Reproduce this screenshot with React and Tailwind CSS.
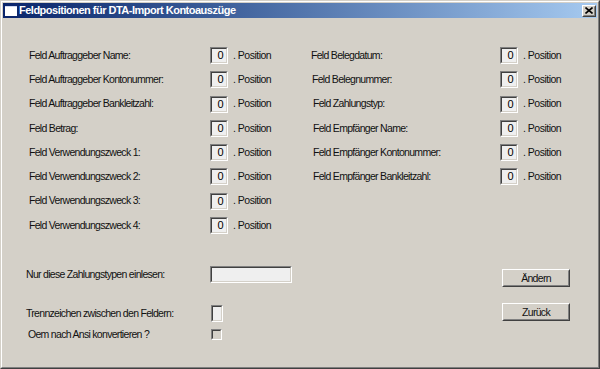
import React from "react";

function Sunken({ className = "", inner = "bg-[#efefef]", children }) {
  return (
    <div className={"border border-t-[#808080] border-l-[#808080] border-b-white border-r-white " + className}>
      <div className={"w-full h-full border border-t-[#404040] border-l-[#404040] border-b-[#d4d0c8] border-r-[#d4d0c8] " + inner}>
        {children}
      </div>
    </div>
  );
}

function Raised({ className = "", children }) {
  return (
    <div className={"border border-t-white border-l-white border-b-[#404040] border-r-[#404040] " + className}>
      <div className="w-full h-full border border-t-[#d4d0c8] border-l-[#d4d0c8] border-b-[#808080] border-r-[#808080] bg-[#d4d0c8] flex items-center justify-center">
        {children}
      </div>
    </div>
  );
}

function NumBox() {
  return (
    <Sunken className="w-[18px] h-[17px] shrink-0">
      <div className="h-full flex items-center justify-end pr-[3px] text-[11px] leading-none text-black">0</div>
    </Sunken>
  );
}

function Row({ label, labelW, offset = 0 }) {
  return (
    <div className="flex items-center h-[17px]">
      <div className="shrink-0 whitespace-nowrap" style={{ width: labelW, paddingLeft: offset }}>
        {label}
      </div>
      <NumBox />
      <div className="ml-[5px] whitespace-nowrap tracking-[-0.5px]">. Position</div>
    </div>
  );
}

export default function App() {
  const left = [
    "Feld Auftraggeber Name:",
    "Feld Auftraggeber Kontonummer:",
    "Feld Auftraggeber Bankleitzahl:",
    "Feld Betrag:",
    "Feld Verwendungszweck 1:",
    "Feld Verwendungszweck 2:",
    "Feld Verwendungszweck 3:",
    "Feld Verwendungszweck 4:",
  ];
  const right = [
    ["Feld Belegdatum:", 0],
    ["Feld Belegnummer:", 1],
    ["Feld Zahlungstyp:", 2],
    ["Feld Empfänger Name:", 2],
    ["Feld Empfänger Kontonummer:", 2],
    ["Feld Empfänger Bankleitzahl:", 2],
  ];
  return (
    <div className="w-[600px] h-[369px] bg-[#d4d0c8] border border-t-[#d4d0c8] border-l-[#d4d0c8] border-b-[#404040] border-r-[#404040] font-['Liberation_Sans',Arial,sans-serif] text-[10.5px] tracking-[-0.7px] text-[#111] overflow-hidden">
      <div className="w-full h-full border border-t-white border-l-white border-b-[#808080] border-r-[#808080] p-px flex flex-col">
        {/* Title bar */}
        <div className="h-[15px] shrink-0 flex items-center bg-gradient-to-r from-[#0a246a] to-[#a6caf0] pl-[2px] pr-px">
          <div className="w-[12px] h-[10px] bg-white shrink-0 border-t border-[#d0d8f0]" />
          <div className="ml-[2px] text-white font-bold text-[11px] tracking-[-0.5px] leading-none whitespace-nowrap">
            Feldpositionen für DTA-Import Kontoauszüge
          </div>
          <div className="flex-1" />
          <Raised className="w-[14px] h-[12px]">
            <svg width="8" height="7" viewBox="0 0 8 7">
              <path d="M0.5 0.5 L7.5 6.5 M7.5 0.5 L0.5 6.5" stroke="#000" strokeWidth="1.6" />
            </svg>
          </Raised>
        </div>
        {/* Body */}
        <div className="flex-1 flex pt-[29px] pl-[26px]">
          {/* Left column */}
          <div className="w-[282px] flex flex-col">
            <div className="flex flex-col gap-[7.3px]">
              {left.map((l) => (
                <Row key={l} label={l} labelW={181} />
              ))}
            </div>
            <div className="mt-[32px] flex items-center h-[17px]">
              <div className="-ml-[3px] whitespace-nowrap" style={{ width: 184 }}>
                Nur diese Zahlungstypen einlesen:
              </div>
              <Sunken className="w-[82px] h-[17px]" />
            </div>
            <div className="mt-[22px] flex items-center h-[17px]">
              <div className="whitespace-nowrap -ml-[3px]" style={{ width: 185 }}>
                Trennzeichen zwischen den Feldern:
              </div>
              <Sunken className="w-[12px] h-[17px]" />
            </div>
            <div className="mt-[7px] flex items-center h-[11px]">
              <div className="whitespace-nowrap -ml-px" style={{ width: 183 }}>
                Oem nach Ansi konvertieren ?
              </div>
              <Sunken className="w-[11px] h-[11px]" inner="bg-[#d4d0c8]" />
            </div>
          </div>
          {/* Right column */}
          <div className="flex flex-col">
            <div className="flex flex-col gap-[7.3px]">
              {right.map(([l, o]) => (
                <Row key={l} label={l} labelW={189} offset={o} />
              ))}
            </div>
            <div className="mt-[84px] ml-[191px] flex flex-col gap-[16px]">
              <Raised className="w-[68px] h-[18px]">
                <span className="leading-none">Ändern</span>
              </Raised>
              <Raised className="w-[68px] h-[18px]">
                <span className="leading-none">Zurück</span>
              </Raised>
            </div>
          </div>
        </div>
      </div>
    </div>
  );
}
